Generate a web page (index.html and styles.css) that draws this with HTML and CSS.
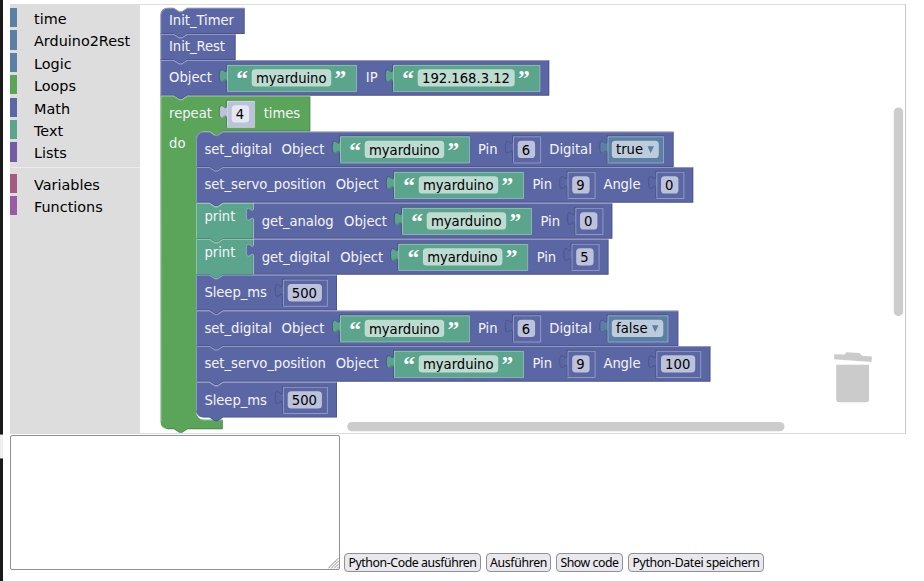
FILE: index.html
```html
<!DOCTYPE html>
<html lang="de">
<head>
<meta charset="utf-8">
<title>Arduino2Rest</title>
<link rel="stylesheet" href="styles.css">
</head>
<body>
<div class="edge"><span class="edge-gap"></span></div>
<main class="page">
  <section class="editor">
    <nav class="toolbox">
      <div class="category logic">time</div>
      <div class="category logic">Arduino2Rest</div>
      <div class="category logic">Logic</div>
      <div class="category loops">Loops</div>
      <div class="category math">Math</div>
      <div class="category text">Text</div>
      <div class="category lists">Lists</div>
      <hr class="separator">
      <div class="category variables">Variables</div>
      <div class="category functions">Functions</div>
    </nav>
    <svg class="workspace" viewBox="140 5 765 428" width="765" height="428" id="workspace">
      <g id="blocks"></g>
      <rect class="scroll" x="347.3" y="422" width="437.2" height="9.3" rx="4.6"/>
      <rect class="scroll" x="893.8" y="107.5" width="9.3" height="208.5" rx="4.6"/>
      <path class="trash" d="M836.2 364.7H869V399.6Q869 402.2 866.4 402.2H838.8Q836.2 402.2 836.2 399.6Z"/>
      <path class="trash" d="M834.3 354.2L844.5 354.6L846.4 352.3L859.5 353L862 355.8L871.9 356.6L871.6 362L834 359.3Z"/>
    </svg>
  </section>
  <section class="controls">
    <div class="output-wrap">
      <textarea class="output"></textarea>
      <svg class="grip" width="11" height="11" viewBox="0 0 11 11"><path d="M0 10.5L10.5 0M3 10.5L10.5 3M6 10.5L10.5 6M9 10.5L10.5 9"/></svg>
    </div>
    <div class="buttons">
      <button class="b1">Python-Code ausführen</button>
      <button class="b2">Ausführen</button>
      <button class="b3">Show code</button>
      <button class="b4">Python-Datei speichern</button>
    </div>
  </section>
</main>
<script src="blocks.js"></script>
</body>
</html>
```
FILE: styles.css
```css
* { box-sizing: border-box; }
body {
  margin: 0;
  width: 924px;
  height: 581px;
  overflow: hidden;
  display: flex;
  background: #fff;
  font-family: "DejaVu Sans", sans-serif;
}
.edge { width: 3px; height: 581px; background: #1a1a1a; padding-top: 434px; }
.edge-gap { display: block; height: 25px; background: #eee; border: solid #777; border-width: 1px 0; }
.page { padding: 4px 0 0 7px; }
.editor {
  display: flex;
  width: 896px;
  height: 430px;
  border: 1px solid #ddd;
  border-left: 0;
  border-right-color: #c6c6c6;
}
.toolbox { width: 130px; height: 428px; background: #ddd; padding-top: 3px; }
.category {
  height: 19.3px;
  margin-bottom: 3.1px;
  padding-left: 17px;
  border-left: 7px solid;
  font-size: 14.4px;
  line-height: 23.6px;
  white-space: nowrap;
  color: #000;
}
.logic { border-left-color: #5b80a5; }
.loops { border-left-color: #5ba55b; }
.math { border-left-color: #5b67a5; }
.text { border-left-color: #5ba58c; }
.lists { border-left-color: #745ba5; }
.variables { border-left-color: #a55b80; }
.functions { border-left-color: #995ba5; }
.separator { height: 1px; margin: 5.5px 0 5.6px; border: 0; background: #ececec; }
.workspace { display: block; }
.workspace text { font-size: 13.2px; fill: #f4f4f8; }
.workspace .value { fill: #000; }
.workspace .quote { font: bold 23.5px "Liberation Serif", serif; fill: #fff; }
.field { fill: #fff; fill-opacity: .6; }
.light { fill: none; stroke: #fff; stroke-opacity: .32; stroke-width: 1; }
.dark { fill: none; stroke: #000; stroke-opacity: .17; stroke-width: 1; }
.arrow { fill: #5b80a5; }
.scroll { fill: #ccc; }
.trash { fill: #cbcbcb; }
.controls { display: flex; align-items: flex-start; padding-top: 1px; height: 139px; }
.output-wrap { position: relative; width: 330px; height: 135px; }
.output {
  display: block;
  width: 330px;
  height: 135px;
  border: 1px solid #8f8f9d;
  border-radius: 2px;
  background: #fff;
  resize: none;
}
.grip { position: absolute; right: 1px; bottom: 1px; }
.grip path { stroke: #777; stroke-width: .8; }
.buttons { display: flex; gap: 5px; padding: 118px 0 0 4px; }
button {
  height: 19px;
  padding: 0;
  border: 1px solid #8f8f9d;
  border-radius: 4px;
  background: #e9e9ed;
  color: #000;
  font: 12.3px/17px "Noto Sans", sans-serif;
  white-space: nowrap;
}
.b1 { width: 137px; letter-spacing: -.42px; }
.b2 { width: 65px; letter-spacing: -.33px; }
.b3 { width: 67px; letter-spacing: -.45px; }
.b4 { width: 136px; letter-spacing: -.36px; }
```
FILE: blocks.js
```js
const root = document.getElementById('blocks');
const MATH = '#5b67a5', LOOPS = '#5ba55b', TEXT = '#5ba58c', LOGIC = '#5b80a5', SHADOW = '#bdc2db';

function add(tag, attrs, content) {
  const node = document.createElementNS('http://www.w3.org/2000/svg', tag);
  for (const key in attrs) node.setAttribute(key, attrs[key]);
  if (content !== undefined) node.textContent = content;
  root.appendChild(node);
}
const path = (d, cls, fill) => add('path', fill ? { d, fill } : { d, class: cls });

function label(text, x, y, width, cls) {
  const attrs = { x, y, class: cls || 'label' };
  if (width) attrs.textLength = width;
  add('text', attrs, text);
}

const NOTCH = 'l5.4 3.6h2.7l5.4 -3.6';
const TAB = 'l-5.4 3.6h-2.7l-5.4 -3.6';

// Statement block: notch on top, matching tab below.
function statement(x, y, right, bottom, color, roundTop, roundBottom) {
  const top = (roundTop ? `M${x} ${y + 7.2}a7.2 7.2 0 0 1 7.2 -7.2` : `M${x} ${y}`) + `H${x + 13.5}${NOTCH}H${right}`;
  const end = roundBottom ? `H${x + 7.2}a7.2 7.2 0 0 1 -7.2 -7.2` : `H${x}`;
  path(`${top}V${bottom}H${x + 27}${TAB}${end}Z`, '', color);
  const startY = roundBottom ? bottom - 7.2 : bottom;
  const hi = roundTop ? `V${y + 7.7}a7.2 7.2 0 0 1 7.2 -7.2` : `V${y + .5}`;
  path(`M${x + .5} ${startY}${hi}H${x + 13.5}${NOTCH}H${right - .5}`, 'light');
  path(`M${right - .5} ${y + 1}V${bottom - .5}H${x + 27}${TAB}H${x + (roundBottom ? 7 : 0)}`, 'dark');
}

// Value block with its plug on the left side.
function plug(x, y, right, bottom, color, inner) {
  const left = `M${x} ${y}v4.5c0 9 -7.2 -7.2 -7.2 6.75s7.2 -2.25 7.2 6.75`;
  path(`${left}V${bottom}H${right}V${y}Z`, '', color);
  if (inner) {
    path(`M${right} ${y - .5}H${x - .5}v4.5c0 9 -7.2 -7.2 -7.2 6.75s7.2 -2.25 7.2 6.75V${bottom}`, 'dark');
    path(`M${x + .5} ${bottom - 1}V${y + .5}H${right}V${bottom}H${x}`, 'light');
  } else {
    path(left + `V${bottom}`, 'light');
    path(`M${x} ${y + .5}H${right}`, 'light');
    path(`M${right - .5} ${y + 1}V${bottom - .5}H${x}`, 'dark');
  }
}

const field = (x, y, width) => add('rect', { x, y: y + 4.4, width, height: 17.4, rx: 3.6, class: 'field' });

function string(x, rowY, value, width) {
  const y = rowY + 4.8;
  plug(x, y, x + width + 50, y + 26.7, TEXT, true);
  label('“', x + 9.3, y + 21.3, 12, 'quote');
  field(x + 24.7, y, width);
  label(value, x + 29, y + 18.2, width - 9, 'value');
  label('”', x + width + 28, y + 21.3, 12, 'quote');
}

function number(x, rowY, value, color) {
  const y = rowY + 4.8, width = value.length * 8.4 + 9;
  plug(x, y, x + width + 10.2, y + 26.7, color || MATH, true);
  field(x + 4.7, y, width);
  label(value, x + 8.8, y + 18.2, value.length * 8.4, 'value');
}

function bool(x, rowY, value, width) {
  const y = rowY + 4.8;
  plug(x, y, x + width + 9, y + 26.7, LOGIC, true);
  field(x + 4.3, y, width);
  label(value, x + 8.5, y + 18, width - 20, 'value');
  const ax = x + width - 7;
  path(`M${ax} ${y + 10}h6.4l-3.2 7Z`, 'arrow');
}

statement(160.3, 7.7, 244.7, 34, MATH, true);
label('Init_Timer', 169, 25, 65);
statement(160.3, 34, 235.7, 60, MATH);
label('Init_Rest', 169, 51, 56);
statement(160.3, 60, 549.3, 95.7, MATH);
label('Object', 169, 82.2, 43);
string(227, 60, 'myarduino', 79.5);
label('IP', 365.8, 82.2, 12);
string(393, 60, '192.168.3.12', 97);

// Loop block wraps the statements below.
path(`M160.3 95.7H174${NOTCH}H310.3V131.5H223.3${TAB}H203.4a7.2 7.2 0 0 0 -7.2 7.2V412a7.4 7.4 0 0 0 7.4 7.4H222.8V429.2H187.5${TAB}H167.7a7.2 7.2 0 0 1 -7.2 -7.2Z`, '', LOOPS);
path(`M161 422V96.2H174${NOTCH}H310`, 'light');
path('M310 97V131H223', 'dark');
path(`M222.3 420V428.7H187.5${TAB}H167.7`, 'dark');
path('M198.4 417.3a7.4 7.4 0 0 0 5.2 2.6H222.5', 'light');
label('repeat', 169, 118, 43);
number(227, 96, '4', SHADOW);
label('times', 263.7, 118, 36.5);
label('do', 169, 148, 16.5);

const X = 196;
function digital(y, value, right, width) {
  statement(X, y, right, y + 35.7, MATH, y < 140);
  label('set_digital', 204.4, y + 22.6, 67.5);
  label('Object', 281.5, y + 22.6, 43);
  string(340, y, 'myarduino', 79.5);
  label('Pin', 478, y + 22.6, 19.5);
  number(513, y, '6');
  label('Digital', 549.3, y + 22.6, 42.5);
  bool(607.5, y, value, width);
}
function servo(y, angle, right) {
  statement(X, y, right, y + 35.7, MATH);
  label('set_servo_position', 204.4, y + 22.4, 121.5);
  label('Object', 335.7, y + 22.4, 43);
  string(394, y, 'myarduino', 79.5);
  label('Pin', 532.5, y + 22.4, 19.5);
  number(567.5, y, '9');
  label('Angle', 603.5, y + 22.4, 37);
  number(656.3, y, angle);
}
function print(y, name, nameWidth, shift, pin) {
  statement(X, y, 253.5, y + 36, TEXT);
  label('print', 204.4, y + 18.3, 31);
  plug(253.5, y, 612.4 - shift, y + 35.7, MATH);
  label(name, 261.8, y + 22.5, nameWidth);
  label('Object', 344 - shift, y + 22.5, 43);
  string(402 - shift, y, 'myarduino', 79.5);
  label('Pin', 540.5 - shift, y + 22.5, 19.5);
  number(575.3 - shift, y, pin);
}
function sleep(y, last) {
  statement(X, y, 337, y + 35.6, MATH, false, last);
  label('Sleep_ms', 204.4, y + 22.6, 62.5);
  number(283, y, '500');
}

digital(131.5, 'true', 673.7, 47);
servo(167, '0', 693.3);
print(203, 'get_analog', 71.7, 0, '0');
print(239, 'get_digital', 68, 3.8, '5');
sleep(274.8);
digital(310.5, 'false', 678.4, 51.5);
servo(346, '100', 710.5);
sleep(382, true);
```
